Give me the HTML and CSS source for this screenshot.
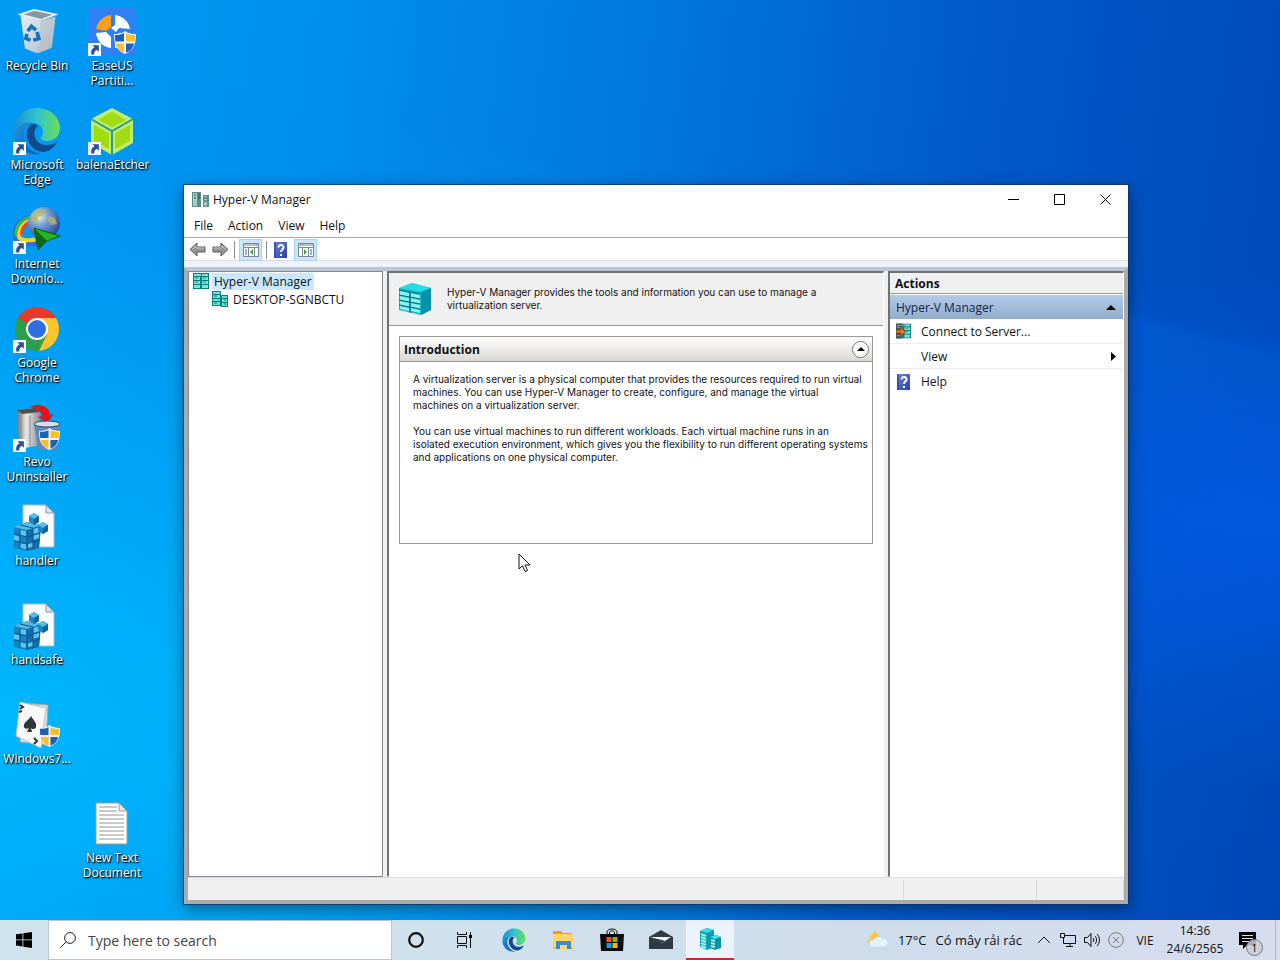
FILE: index.html
```
<!DOCTYPE html>
<html lang="en">
<head>
  <meta charset="UTF-8">
  <meta name="viewport" content="width=device-width, initial-scale=1.0">
  <title>Hyper-V Manager</title>
  <link rel="stylesheet" href="styles.css">
</head>
<body>
  <!-- shared icons -->
  <svg class="sprite" aria-hidden="true">
    <defs>
      <linearGradient id="gEdgeTop" x1="0" y1="0" x2="1" y2="0"><stop offset="0" stop-color="#1b8fd8"/><stop offset=".5" stop-color="#2fc2d0"/><stop offset="1" stop-color="#6be04f"/></linearGradient>
      <linearGradient id="gEdgeLow" x1="0" y1="0" x2="1" y2="1"><stop offset="0" stop-color="#2196e0"/><stop offset="1" stop-color="#0c56a8"/></linearGradient>
      <linearGradient id="gBin" x1="0" y1="0" x2="1" y2="1"><stop offset="0" stop-color="#e4edf4"/><stop offset=".6" stop-color="#c3d2de"/><stop offset="1" stop-color="#b3a8a4"/></linearGradient>
      <radialGradient id="gGlobe" cx=".35" cy=".3" r=".8"><stop offset="0" stop-color="#e9f3d0"/><stop offset=".35" stop-color="#7ba0d8"/><stop offset="1" stop-color="#173a8c"/></radialGradient>
      <linearGradient id="gMetal" x1="0" y1="0" x2="1" y2="0"><stop offset="0" stop-color="#6d6d6d"/><stop offset=".4" stop-color="#e8e8e8"/><stop offset="1" stop-color="#8d8d8d"/></linearGradient>
      <linearGradient id="gHelp" x1="0" y1="0" x2="1" y2="1"><stop offset="0" stop-color="#6a86dc"/><stop offset="1" stop-color="#2a3fa5"/></linearGradient>
    </defs>
    <symbol id="shortcut" viewBox="0 0 12 12">
      <path d="M0 0h12v12H0z" fill="#f7f9fc"/>
      <path d="M4 2h6v6L8 6.200C6.300 7.200 5.600 8.500 5.800 10.500H3C2.400 7.600 3.600 5.300 6 4z" fill="#2d4f96"/>
    </symbol>
    <symbol id="shield" viewBox="0 0 22 23">
      <path d="M11 0c3 2.500 6 3 11 3 0 10-2 16-11 20C2 19 0 13 0 3c5 0 8-.500 11-3z" fill="#f2f4f6"/>
      <path d="M10 2v8.500H1.300C1 8.500 1 6 1 4c4 0 6.500-.500 9-2zM12 12.500h8.200C19 17 16.500 20 12 21.700z" fill="#1f61b5"/>
      <path d="M12 2c2.500 1.500 5 2 9 2 0 2 0 4.500-.300 6.500H12zM10 12.500H1.800C3 17 5.500 20 10 21.700z" fill="#fbbf2d"/>
    </symbol>
    <symbol id="edge" viewBox="0 0 48 48">
      <path d="M1 27C0 12 10 1 24 1c14 0 23 10 23 20 0 8-6 13-13 13-5 0-7-2-6-4 4-4 2-13-7-14C11 15 3 20 1 27z" fill="url(#gEdgeTop)"/>
      <path d="M1 27c2-8 10-12 18-11-6 2-9 8-8 14 1 9 8 16 17 17C13 49 2 40 1 27z" fill="url(#gEdgeLow)"/>
      <path d="M19 17c-7 4-7 15-1 22 7 8 19 9 26-4-7 4-16 4-20-1-4-5-3-13 1-15-2-2-4-2-6-2z" fill="#114a8b"/>
    </symbol>
    <symbol id="reg" viewBox="0 0 48 48">
      <path d="M10 2h23l8 8v34H10z" fill="#fafbfc" stroke="#a5bfce"/>
      <path d="M33 2v8h8z" fill="#dce3e8" stroke="#8d9aa5"/>
      <path d="M1 24l13-5 14 3-2 23-12 3-13-3z" fill="#1584bf"/>
      <path d="M14 27l14-4-2 22-12 3z" fill="#0f6dab"/>
      <path d="M1 24l13-5 14 3-14 5z" fill="#55b9e6"/>
      <path d="M7 27l6 1v5l-6-1zM1 32l5 1v5l-5-1zM7 40l6 1v5l-6-1zM20 32l6-2v5l-6 2zM15 40l5-1v5l-5 1zM20 26l7-2v5l-7 2z" fill="#5fc3ed"/>
      <path d="M7 26v20M14 27v21M20 25v21M1 31l13 3 13-4M1 38l13 3 13-4M7 22l13 3" stroke="#0b578f" fill="none"/>
      <path d="M16 13l5-3 5 3v6l-5 3-5-3zM25 22l5-3 5 3v6l-5 3-5-3z" fill="#1a86bf"/>
      <path d="M16 13l5-3 5 3-5 3zM25 22l5-3 5 3-5 3z" fill="#57bce6"/>
      <path d="M21 16l5-3v6l-5 3zM30 25l5-3v6l-5 3z" fill="#0d639c"/>
    </symbol>
    <symbol id="rack" viewBox="0 0 34 34">
      <path d="M1 6l13-5 19 5v22l-10 5L1 28z" fill="#12b6c4"/>
      <path d="M1 6l13-5 19 5-10 4z" fill="#25dbe3"/>
      <path d="M23 10l10-4v22l-10 5z" fill="#0a93a8"/>
      <path d="M2 9l9 2v4l-9-2zM2 14l9 2v4l-9-2zM2 19l9 2v4l-9-2zM2 24l9 2v3l-9-2zM13 11l9 2v4l-9-2zM13 16l9 2v4l-9-2zM13 21l9 2v4l-9-2zM13 26l9 2v3l-9-2z" fill="#8bf0f0"/>
      <path d="M1 8l21 4M1 13l21 4M1 18l21 4M1 23l21 4M12 10v21" stroke="#086879" fill="none"/>
    </symbol>
    <symbol id="servers" viewBox="0 0 16 16">
      <path d="M0 0h16v16H0z" fill="#0b7f80"/>
      <path d="M1 1h7v2H1zM9 1h6v2H9zM1 4h6v3H1zM9 4h6v3H9zM1 8h6v3H1zM9 8h6v3H9zM1 12h6v3H1zM9 12h6v3H9z" fill="#79e5de"/>
      <path d="M2 5h3M10 5h3M2 9h3M10 9h3" stroke="#168f8f" fill="none"/>
    </symbol>
    <symbol id="host" viewBox="0 0 16 16">
      <path d="M0 0h9v4h7v12H9v-1H0z" fill="#0b7f80"/>
      <path d="M1 1h7v2H1zM1 4h7v3H1zM1 8h7v2H1zM1 11h7v3H1zM10 5h5v2h-5zM10 8h5v3h-5zM10 12h5v3h-5z" fill="#6fe0d8"/>
      <path d="M2 5h3M2 12h3M12 9h2M12 13h2" stroke="#14797a" fill="none"/>
    </symbol>
    <symbol id="help" viewBox="0 0 13 16">
      <path d="M0 0h13v16H0z" fill="url(#gHelp)"/>
      <path d="M1 0v16" stroke="#26348a"/>
      <path d="M4.500 5.500c0-3.500 5.500-3.300 5 0-.300 1.800-2.500 1.900-2.500 4.500M7 12v2" stroke="#fff" stroke-width="2" fill="none"/>
    </symbol>
    <symbol id="arrow" viewBox="0 0 17 15">
      <path d="M1 7.500L8 1v4h8v5H8v4z" fill="#969696" stroke="#5d5d5d"/>
      <path d="M3 7.500L7 4v2h8" stroke="#c4c4c4" fill="none"/>
    </symbol>
    <symbol id="paneview" viewBox="0 0 16 14">
      <path d="M.5.5h15v13H.5z" fill="#fbfbfb" stroke="#7c8794"/>
      <path d="M1 1h14v2H1z" fill="#b9c3cf"/>
      <path d="M11 2h1M13 2h1M1 4.500h14M5.500 5v8M11.500 5v8" stroke="#7c8794" fill="none"/>
      <path d="M2 7h2M2 9h2M2 11h2" stroke="#3c6ea8" fill="none"/>
    </symbol>
  </svg>

  <main class="desktop">
    <div class="shortcuts">
      <button class="shortcut">
        <svg viewBox="-2 -1 52 52">
          <path d="M6 6l5 37 13 5 16-6 4-33-16 4z" fill="url(#gBin)"/>
          <path d="M6 6l15-5 23 5-16 6z" fill="#8798a5" stroke="#e6eef4" stroke-width="2"/>
          <path d="M28 12l16-4-4 34-14 6z" fill="#b7bfc6" opacity=".6"/>
          <path d="M14 24l4-5 5 4M24 25l2 7-6 2M17 34l-5-2 1-5" stroke="#1673c0" stroke-width="4" fill="none"/>
        </svg>
        <span>Recycle Bin</span>
      </button>
      <button class="shortcut">
        <svg viewBox="0 0 48 48">
          <path d="M1 0h46v48H1z" fill="#2f80f5"/>
          <path d="M8 21a17 17 0 0 1 15-14v12l-5 4z" fill="#fb9e18"/>
          <path d="M27 7a17 17 0 0 1 15 14l-11-1-3 4-5-4 4-3zM8 25a17 17 0 0 0 15 15V29l-5-5zM27 40a17 17 0 0 0 15-15H31l-4 5z" fill="#fff"/>
          <use href="#shield" x="26" y="23" width="22" height="23"/>
          <use href="#shortcut" x="0" y="35" width="13" height="13"/>
        </svg>
        <span>EaseUS Partiti...</span>
      </button>
      <button class="shortcut">
        <svg viewBox="0 0 48 48">
          <use href="#edge" width="48" height="48"/>
          <use href="#shortcut" x="0" y="35" width="13" height="13"/>
        </svg>
        <span>Microsoft Edge</span>
      </button>
      <button class="shortcut">
        <svg viewBox="0 0 48 48">
          <path d="M24 1l21 11v24L24 48 3 36V12z" fill="#bdee6a"/>
          <path d="M24 5l14 8-14 7-14-7zM6 18l15 8v16L6 34zM42 18l-15 8v16l15-8z" fill="#a1dc12"/>
          <path d="M3 12l21 12 21-12M24 24v24" stroke="#289a8e" stroke-width="2" fill="none"/>
          <use href="#shortcut" x="0" y="35" width="13" height="13"/>
        </svg>
        <span>balenaEtcher</span>
      </button>
      <button class="shortcut">
        <svg viewBox="0 0 48 48">
          <path d="M20 11C8 12 0 22 2 32c2 6 14 7 24 5" stroke="#2a6fe0" stroke-width="5" fill="none"/>
          <path d="M20 13C10 14 4 23 6 31c2 4 12 4 18 2" stroke="#f5d322" stroke-width="4" fill="none"/>
          <path d="M20 11C9 12 2 21 3 30" stroke="#46b93a" stroke-width="3" fill="none"/>
          <path d="M20 15c-8 2-12 8-11 14" stroke="#e8452c" stroke-width="3" fill="none"/>
          <circle cx="31" cy="17" r="16" fill="url(#gGlobe)"/>
          <path d="M19 9c5-6 10-6 14-5l-4 6-4 1-1 6-6-2zM36 10l6 2 2 6-5 1-4-4z" fill="#b5b663" opacity=".8"/>
          <path d="M21 22l26 8-13 5-9 9z" fill="#27b51c" stroke="#0b5c10"/>
          <path d="M21 22l13 13-9 9z" fill="#0c6a14"/>
          <use href="#shortcut" x="0" y="35" width="13" height="13"/>
        </svg>
        <span>Internet Downlo...</span>
      </button>
      <button class="shortcut">
        <svg viewBox="0 0 48 48">
          <circle cx="24" cy="24" r="22" fill="#2c9f4d"/>
          <path d="M24 24L5 13a22 22 0 0 1 38 0z" fill="#e33b2e"/>
          <path d="M24 13h19a22 22 0 0 1-17 33l8-17z" fill="#fcc62b"/>
          <circle cx="24" cy="24" r="11" fill="#fff"/>
          <circle cx="24" cy="24" r="9" fill="#2f6de0"/>
          <use href="#shortcut" x="0" y="35" width="13" height="13"/>
        </svg>
        <span>Google Chrome</span>
      </button>
      <button class="shortcut">
        <svg viewBox="0 0 48 48">
          <path d="M4 6l18-2 5 4v33l-15 3-6-5z" fill="url(#gMetal)"/>
          <path d="M4 6l18-2 5 4-18 2z" fill="#4e4e4e"/>
          <path d="M8 10v30M17 12v30" stroke="#8a8a8a" fill="none"/>
          <path d="M17 3c10-5 20 0 20 8l4-1-7 9-9-6 4-1c0-4-5-7-12-9z" fill="#df1622"/>
          <path d="M21 20h26l-3 26H25z" fill="#5f88bf"/>
          <ellipse cx="34" cy="20" rx="13" ry="3" fill="#d8dfe8" stroke="#33496d"/>
          <use href="#shield" x="26" y="24" width="21" height="22"/>
          <use href="#shortcut" x="0" y="35" width="13" height="13"/>
        </svg>
        <span>Revo Uninstaller</span>
      </button>
      <button class="shortcut">
        <svg viewBox="0 0 48 48"><use href="#reg"/></svg>
        <span>handler</span>
      </button>
      <button class="shortcut">
        <svg viewBox="0 0 48 48"><use href="#reg"/></svg>
        <span>handsafe</span>
      </button>
      <button class="shortcut">
        <svg viewBox="0 0 48 48">
          <path d="M9 2l26 2-2 40-26-3z" fill="#dfe1e3" stroke="#a2a6aa"/>
          <path d="M7 1l26 6-5 40L3 35z" fill="#f8f8f8" stroke="#b9bcbf"/>
          <path d="M18 15c3 5 6 7 5 11-1 3-4 2-5 1l1 4h-5l2-4c-3 2-6 0-5-3 0-3 5-5 7-9z" fill="#2f3434"/>
          <path d="M7 4l3 2-3 2M6 11l3-1M21 37l3 3-3 3" stroke="#333" stroke-width="2" fill="none"/>
          <use href="#shield" x="26" y="24" width="21" height="22"/>
        </svg>
        <span>Windows7...</span>
      </button>
      <button class="shortcut second-column">
        <svg viewBox="0 0 48 48">
          <path d="M8 3h23l8 8v33H8z" fill="#fff" stroke="#9c9c9c"/>
          <path d="M31 3v8h8z" fill="#e8e8e8" stroke="#9c9c9c"/>
          <path d="M11 7h18M11 11h18M11 15h25M11 19h25M11 23h25M11 27h25M11 31h25M11 35h25M11 39h25" stroke="#8e979e" fill="none"/>
        </svg>
        <span>New Text Document</span>
      </button>
    </div>

    <section class="window" aria-label="Hyper-V Manager">
      <header class="titlebar">
        <svg class="title-icon" viewBox="0 0 17 16">
          <path d="M0 0h9v15H0z" fill="#5c8e88"/><path d="M1 1h4v13H1z" fill="#a4cfc6"/><path d="M6 2h2M6 4h2M6 6h2M2 3h2M2 6h2" stroke="#2e5a57"/>
          <path d="M11 3h6v12h-6z" fill="#5c8e88"/><path d="M12 4h3v10h-3z" fill="#9ecbc0"/><path d="M12 6h3M12 9h3" stroke="#2e5a57"/>
        </svg>
        <h1>Hyper-V Manager</h1>
        <div class="window-buttons">
          <button aria-label="Minimize"><svg viewBox="0 0 11 11"><path d="M0 5.500h11"/></svg></button>
          <button aria-label="Maximize"><svg viewBox="0 0 11 11"><path d="M.5.5h10v10H.5z"/></svg></button>
          <button aria-label="Close"><svg viewBox="0 0 11 11"><path d="M.5.5l10 10M10.500.5l-10 10"/></svg></button>
        </div>
      </header>
      <nav class="menubar">
        <button>File</button>
        <button>Action</button>
        <button>View</button>
        <button>Help</button>
      </nav>
      <div class="toolbar">
        <button aria-label="Back"><svg class="nav-arrow" viewBox="0 0 17 15"><use href="#arrow"/></svg></button>
        <button aria-label="Forward"><svg class="nav-arrow forward" viewBox="0 0 17 15"><use href="#arrow"/></svg></button>
        <span class="divider"></span>
        <button class="pressed" aria-label="Show or hide console tree">
          <svg class="pane-icon" viewBox="0 0 16 14"><use href="#paneview"/><path d="M10 6v6L7 9z" fill="#4aa02c"/></svg>
        </button>
        <span class="divider"></span>
        <button aria-label="Help"><svg class="help-icon"><use href="#help"/></svg></button>
        <button class="pressed" aria-label="Show or hide action pane">
          <svg class="pane-icon mirrored" viewBox="0 0 16 14"><use href="#paneview"/><path d="M10 6v6L7 9z" fill="#4aa02c"/></svg>
        </button>
      </div>
      <div class="frame">
        <div class="panes">
          <ul class="tree">
            <li><a class="selected" href="#"><svg><use href="#servers"/></svg><span>Hyper-V Manager</span></a>
              <ul>
                <li><a href="#"><svg><use href="#host"/></svg><span>DESKTOP-SGNBCTU</span></a></li>
              </ul>
            </li>
          </ul>

          <div class="content">
            <div class="summary">
              <svg viewBox="0 0 34 34"><use href="#rack"/></svg>
              <p>Hyper-V Manager provides the tools and information you can use to manage a<br>virtualization server.</p>
            </div>
            <article class="intro">
              <header>
                <h2>Introduction</h2>
                <button aria-label="Collapse"><svg viewBox="0 0 8 4"><path d="M0 4l4-4 4 4z"/></svg></button>
              </header>
              <p>A virtualization server is a physical computer that provides the resources required to run virtual<br>machines. You can use Hyper-V Manager to create, configure, and manage the virtual<br>machines on a virtualization server.</p>
              <p>You can use virtual machines to run different workloads. Each virtual machine runs in an<br>isolated execution environment, which gives you the flexibility to run different operating systems<br>and applications on one physical computer.</p>
            </article>
          </div>

          <aside class="actions">
            <h2>Actions</h2>
            <button class="group"><span>Hyper-V Manager</span><svg viewBox="0 0 10 5"><path d="M0 5l5-5 5 5z"/></svg></button>
            <button class="action">
              <svg class="action-icon" viewBox="0 0 16 16">
                <use href="#servers" width="16" height="16"/><path d="M0 0h7v16H0z" fill="#47555c"/><path d="M1 2h5M1 4h5M1 13h5" stroke="#90a4aa"/><path d="M0 7h5V4l5 5-5 4v-3H0z" fill="#ef7d23" stroke="#8f3b0c"/>
              </svg>
              <span>Connect to Server...</span>
            </button>
            <button class="action"><span class="action-icon"></span><span>View</span><svg class="more" viewBox="0 0 5 9"><path d="M0 0l5 4.500L0 9z"/></svg></button>
            <button class="action"><svg class="action-icon"><use href="#help"/></svg><span>Help</span></button>
          </aside>
        </div>
        <footer class="statusbar"><span></span><span></span><span></span></footer>
      </div>
    </section>

    <svg class="pointer" viewBox="0 0 13 20"><path d="M1 1v15l3.500-3.200 2.500 5.700 2.500-1-2.500-5.500h5z" fill="#fff" stroke="#111"/></svg>
  </main>

  <footer class="taskbar">
    <button class="start" aria-label="Start">
      <svg viewBox="0 0 16 16"><path d="M0 2.300L6.500 1.400v6.100H0zM7.300 1.300L16 0v7.500H7.300zM0 8.300h6.500v6.200L0 13.600zM7.300 8.300H16V16l-8.700-1.300z"/></svg>
    </button>
    <label class="search">
      <svg viewBox="0 0 16 16"><circle cx="10" cy="6" r="5.400"/><path d="M6.200 9.800L.5 15.500"/></svg>
      <input type="text" placeholder="Type here to search" aria-label="Type here to search">
    </label>
    <nav class="apps">
      <button aria-label="Cortana"><svg class="small" viewBox="0 0 16 16"><circle cx="8" cy="8" r="6.800" fill="none" stroke="#0b0f14" stroke-width="2.200"/></svg></button>
      <button aria-label="Task View"><svg class="small" viewBox="0 0 16 16"><path d="M.5 0v2.500h9V0M.5 16v-2.500h9V16M.5 4.500h9v7h-9zM13.500 0v16" fill="none" stroke="#0b0f14"/><path d="M12 3h3v3h-3z"/></svg></button>
      <button aria-label="Microsoft Edge"><svg viewBox="0 0 48 48"><use href="#edge"/></svg></button>
      <button aria-label="File Explorer">
        <svg viewBox="0 0 24 24"><path d="M2 3h8l2 2h9v4H2z" fill="#e3a21a"/><path d="M2 6h20v15H2z" fill="#ffd667"/><path d="M5 21v-8h15v8h-4v-4H9v4z" fill="#3e8cc7"/><path d="M2 19h3v2H2zM20 19h2v2h-2z" fill="#f3bd46"/></svg>
      </button>
      <button aria-label="Microsoft Store">
        <svg viewBox="0 0 24 24"><path d="M7 7V4c0-4 10-4 10 0v3M9.500 7V5c0-3 5-3 5 0v2" fill="none" stroke="#111"/><path d="M0 6h24l-1 17H1z" fill="#0a0a0a"/><path d="M6.500 9h5v5h-5z" fill="#f25022"/><path d="M12.500 9h5v5h-5z" fill="#7fba00"/><path d="M6.500 15h5v5h-5z" fill="#00a4ef"/><path d="M12.500 15h5v5h-5z" fill="#ffb900"/></svg>
      </button>
      <button aria-label="Mail">
        <svg viewBox="0 0 24 24"><path d="M0 9l12-7 12 7v12H0z" fill="#2f3b45"/><path d="M2 9h20l-9 6z" fill="#eef3f7"/><path d="M0 9l13 6 3-2-3-1z" fill="#2f3b45"/></svg>
      </button>
      <button class="active" aria-label="Hyper-V Manager">
        <svg viewBox="0 0 24 24"><path d="M2 4l7-3 7 2v17l-7 3-7-3z" fill="#0b9cae"/><path d="M2 4l7-3 7 2-7 3z" fill="#3adbe2"/><path d="M3 7l5 2M3 10l5 2M3 13l5 2M3 16l5 2M3 19l5 2" stroke="#9df4f2" stroke-width="2"/><path d="M12 10l6-2 5 2v11l-6 2-5-2z" fill="#0c92a5"/><path d="M12 10l6-2 5 2-6 2z" fill="#49e2e6"/><path d="M13 13l4 1M13 16l4 1M13 19l4 1" stroke="#9df4f2" stroke-width="2"/></svg>
      </button>
    </nav>
    <div class="tray">
      <button class="weather">
        <svg viewBox="0 0 24 20"><circle cx="9" cy="7" r="5" fill="#fbc72c"/><path d="M1 13l3-4M9 0v2M2 6h2" stroke="#fbc72c" stroke-width="2"/><path d="M6 18a4 4 0 0 1 1-8 6 6 0 0 1 10-2 5 5 0 0 1 2 10z" fill="#e6f3fd" stroke="#b4d6ef"/></svg>
        <span>17°C</span><span>Có mây rải rác</span>
      </button>
      <button class="tray-icon" aria-label="Show hidden icons"><svg viewBox="0 0 16 16"><path d="M2 11l6-6 6 6"/></svg></button>
      <button class="tray-icon" aria-label="Network"><svg viewBox="0 0 16 16"><path d="M5 3.500h10.500v8H3.500V6M10 11.500v3M6 14.500h7M.5 1.500h4v4h-4z"/></svg></button>
      <button class="tray-icon" aria-label="Volume"><svg viewBox="0 0 16 16"><path d="M.5 5.500h3l3.500-4v13l-3.500-4h-3zM9 6c1 1 1 3 0 4M11 4c2 2 2 6 0 8M13 2c3.300 3 3.300 9 0 12"/></svg></button>
      <button class="tray-icon muted" aria-label="Status"><svg viewBox="0 0 16 16"><circle cx="8" cy="8" r="7.300"/><path d="M5 5l6 6M11 5l-6 6"/></svg></button>
      <button class="language">VIE</button>
      <button class="clock"><time>14:36</time><span>24/6/2565</span></button>
      <button class="notifications" aria-label="Notifications">
        <svg viewBox="0 0 17 17"><path d="M0 0h17v13H8l-4 4v-4H0z"/><path d="M3 3.500h11M3 6.500h11M3 9.500h7" stroke="#dbe2f0"/></svg>
        <span class="badge">1</span>
      </button>
    </div>
  </footer>
</body>
</html>
```
FILE: styles.css
```
* {
  box-sizing: border-box;
}

body {
  margin: 0;
  height: 100vh;
  display: flex;
  flex-direction: column;
  overflow: hidden;
  font-family: "Open Sans", "Noto Sans", sans-serif;
  font-size: 12px;
  color: #111;
  background:
    linear-gradient(194deg, rgba(0, 140, 255, 0) 27%, rgba(0, 140, 255, .12) 28%, rgba(0, 140, 255, 0) 70%),
    radial-gradient(ellipse at 100% 55%, rgba(0, 88, 232, .7), rgba(0, 80, 220, 0) 35%),
    radial-gradient(ellipse at 0% 75%, rgba(0, 190, 255, .8), rgba(0, 170, 250, 0) 50%),
    linear-gradient(97deg, #009cf4 0%, #0092ee 20%, #007ade 45%, #0058ca 72%, #0046b6 100%);
}

h1, h2, p, ul {
  margin: 0;
  padding: 0;
}

ul {
  list-style: none;
}

button {
  margin: 0;
  padding: 0;
  border: 0;
  background: none;
  font: inherit;
  color: inherit;
}

a {
  color: inherit;
  text-decoration: none;
}

svg {
  display: block;
  flex: none;
}

.sprite {
  position: absolute;
  width: 0;
  height: 0;
}

/* desktop */
.desktop {
  position: relative;
  flex: 1;
  min-height: 0;
}

.shortcuts {
  display: grid;
  grid-template-columns: 74px 76px;
  grid-auto-rows: 99px;
  width: 150px;
}

.shortcut {
  grid-column: 1;
  display: flex;
  flex-direction: column;
  align-items: center;
  padding-top: 8px;
  color: #fff;
  line-height: 15px;
  text-shadow: 1px 1px 1px #000, 0 1px 3px rgba(0, 0, 0, .8);
}

.shortcut:nth-child(2),
.shortcut:nth-child(4),
.second-column {
  grid-column: 2;
}

.second-column {
  grid-row: 9;
}

.shortcut svg {
  width: 48px;
  height: 48px;
  margin-bottom: 2px;
}

.shortcut span {
  max-width: 72px;
}

.pointer {
  position: absolute;
  left: 518px;
  top: 553px;
  width: 13px;
  height: 20px;
}

/* window */
.window {
  position: absolute;
  left: 184px;
  top: 185px;
  right: 152px;
  bottom: 16px;
  display: flex;
  flex-direction: column;
  background: #fff;
  box-shadow: 0 0 0 1px rgba(20, 50, 90, .7), 0 4px 14px rgba(0, 0, 0, .45);
}

.titlebar {
  display: flex;
  align-items: center;
  height: 29px;
  padding-left: 8px;
}

.title-icon {
  width: 17px;
  height: 16px;
}

.titlebar h1 {
  flex: 1;
  margin-left: 4px;
  font-size: 12px;
  font-weight: 400;
}

.window-buttons {
  display: flex;
  height: 29px;
}

.window-buttons button {
  display: flex;
  align-items: center;
  justify-content: center;
  width: 46px;
}

.window-buttons svg {
  width: 11px;
  height: 11px;
  fill: none;
  stroke: #000;
}

.menubar {
  display: flex;
  height: 24px;
  padding-left: 2px;
  border-bottom: 1px solid #a9a9a9;
}

.menubar button {
  padding: 0 7px 0 8px;
}

.toolbar {
  display: flex;
  align-items: center;
  gap: 4px;
  height: 29px;
  padding: 0 4px 6px;
  background: linear-gradient(#fff 22px, #d5dbe2 22px, #d5dbe2 23px, #eef3f9 23px);
}

.toolbar button {
  display: flex;
  align-items: center;
  justify-content: center;
  width: 19px;
  height: 22px;
}

.toolbar .pressed {
  width: 23px;
  background: #cce6f8;
  border: 1px solid #a8d3f0;
}

.divider {
  width: 1px;
  height: 18px;
  background: #8d8d8d;
}

.nav-arrow {
  width: 17px;
  height: 15px;
}

.forward,
.mirrored {
  transform: scaleX(-1);
}

.pane-icon {
  width: 16px;
  height: 14px;
}

.help-icon {
  width: 13px;
  height: 16px;
}

.frame {
  flex: 1;
  min-height: 0;
  display: flex;
  flex-direction: column;
  background: #f0f0f0;
  border: 4px solid #aaa;
  border-top-color: #bac6d3;
}

.panes {
  flex: 1;
  min-height: 0;
  display: grid;
  grid-template-columns: 195px 1fr 236px;
  gap: 4px;
}

.tree {
  padding: 0 4px;
  background: #fff;
  border: 1px solid #828790;
}

.tree ul {
  padding-left: 19px;
}

.tree a {
  display: flex;
  align-items: center;
  gap: 3px;
  height: 18px;
}

.tree a svg {
  width: 16px;
  height: 16px;
}

.tree a span {
  padding: 0 2px;
  line-height: 17px;
}

.tree .selected span {
  background: #cce8ff;
}

.content,
.actions {
  background: #fff;
  border: 1px solid #fff;
  border-top: 2px solid #6d7178;
  border-left: 2px solid #6d7178;
}

.content p {
  font-family: Inter, "Liberation Sans", sans-serif;
  font-size: 10px;
  line-height: 13px;
}

.summary {
  display: flex;
  gap: 15px;
  height: 53px;
  padding: 9px;
  background: #f0f0f0;
  border-bottom: 1px solid #929292;
}

.summary svg {
  width: 34px;
  height: 34px;
}

.summary p {
  padding-top: 4px;
}

.intro {
  min-height: 208px;
  margin: 10px;
  border: 1px solid #999;
}

.intro header {
  display: flex;
  align-items: center;
  justify-content: space-between;
  height: 25px;
  margin-bottom: 11px;
  padding: 0 3px 0 4px;
  background: linear-gradient(#fff, #dad8d2);
  border-bottom: 1px solid #999;
}

.intro h2,
.actions h2 {
  font-size: 12px;
  font-weight: 700;
}

.intro header button {
  display: flex;
  align-items: center;
  justify-content: center;
  width: 17px;
  height: 17px;
  background: #fff;
  border: 1px solid #777;
  border-radius: 50%;
}

.intro header svg {
  width: 8px;
  height: 4px;
}

.intro p {
  margin: 0 2px 13px 13px;
}

.actions h2 {
  height: 21px;
  padding-left: 5px;
  line-height: 22px;
  background: #f0f0f0;
  border-bottom: 1px solid #9b9b9b;
}

.actions button {
  display: flex;
  align-items: center;
  width: 100%;
  height: 25px;
  padding: 0 7px 0 6px;
}

.actions .group {
  justify-content: space-between;
  color: #14264a;
  background: linear-gradient(#b2cae6, #92aecd);
  border-top: 1px solid #fff;
}

.group svg {
  width: 10px;
  height: 5px;
}

.actions .action {
  gap: 10px;
  border-bottom: 1px solid #ececec;
}

.actions .action:last-child {
  border-bottom: 0;
}

.action-icon {
  width: 15px;
  height: 16px;
}

.more {
  width: 5px;
  height: 9px;
  margin-left: auto;
}

.statusbar {
  display: grid;
  grid-template-columns: 1fr 133px 87px;
  height: 23px;
  padding: 2px 0;
  border-top: 1px solid #dcdcdc;
}

.statusbar span {
  border-right: 1px solid #d5d5d5;
}

/* taskbar */
.taskbar {
  display: flex;
  height: 40px;
  background: linear-gradient(90deg, #cfe3ef, #cfe1ec 40%, #cfdcec 70%, #d7dcee);
}

.start {
  width: 48px;
}

.start svg {
  width: 16px;
  height: 16px;
  margin: auto;
}

.search {
  display: flex;
  align-items: center;
  gap: 12px;
  width: 344px;
  padding-left: 11px;
  background: #fff;
  border: 1px solid #bcc5cc;
}

.search svg {
  width: 16px;
  height: 16px;
  fill: none;
  stroke: #222;
}

.search input {
  flex: 1;
  min-width: 0;
  padding: 0;
  border: 0;
  outline: 0;
  background: none;
  font: inherit;
  font-size: 14px;
}

.search input::placeholder {
  color: #444;
  opacity: 1;
}

.apps {
  display: flex;
  gap: 1px;
}

.apps button {
  display: flex;
  align-items: center;
  justify-content: center;
  width: 48px;
}

.apps svg {
  width: 24px;
  height: 24px;
}

.apps .small {
  width: 16px;
  height: 16px;
}

.apps .active {
  background: #edf3fa;
  border-bottom: 2px solid #e01b2c;
}

.tray {
  display: flex;
  align-items: center;
  margin-left: auto;
  padding-right: 4px;
}

.weather {
  display: flex;
  align-items: center;
  gap: 9px;
  margin-right: 10px;
  font-size: 13px;
}

.weather svg {
  width: 22px;
  height: 20px;
}

.tray-icon {
  width: 24px;
}

.tray-icon svg {
  width: 16px;
  height: 16px;
  margin: auto;
  fill: none;
  stroke: #111;
}

.muted svg {
  stroke: #777;
}

.language {
  width: 34px;
}

.clock {
  display: flex;
  flex-direction: column;
  align-items: center;
  width: 66px;
  line-height: 18px;
}

.notifications {
  position: relative;
  width: 48px;
  height: 40px;
  border-right: 1px solid #aab6cc;
}

.notifications svg {
  width: 17px;
  height: 17px;
  margin: 0 auto 0 11px;
}

.badge {
  position: absolute;
  right: 12px;
  bottom: 4px;
  width: 17px;
  height: 17px;
  font-size: 11px;
  line-height: 15px;
  text-align: center;
  background: rgba(200, 205, 215, .85);
  border: 1px solid #777;
  border-radius: 50%;
}
```
